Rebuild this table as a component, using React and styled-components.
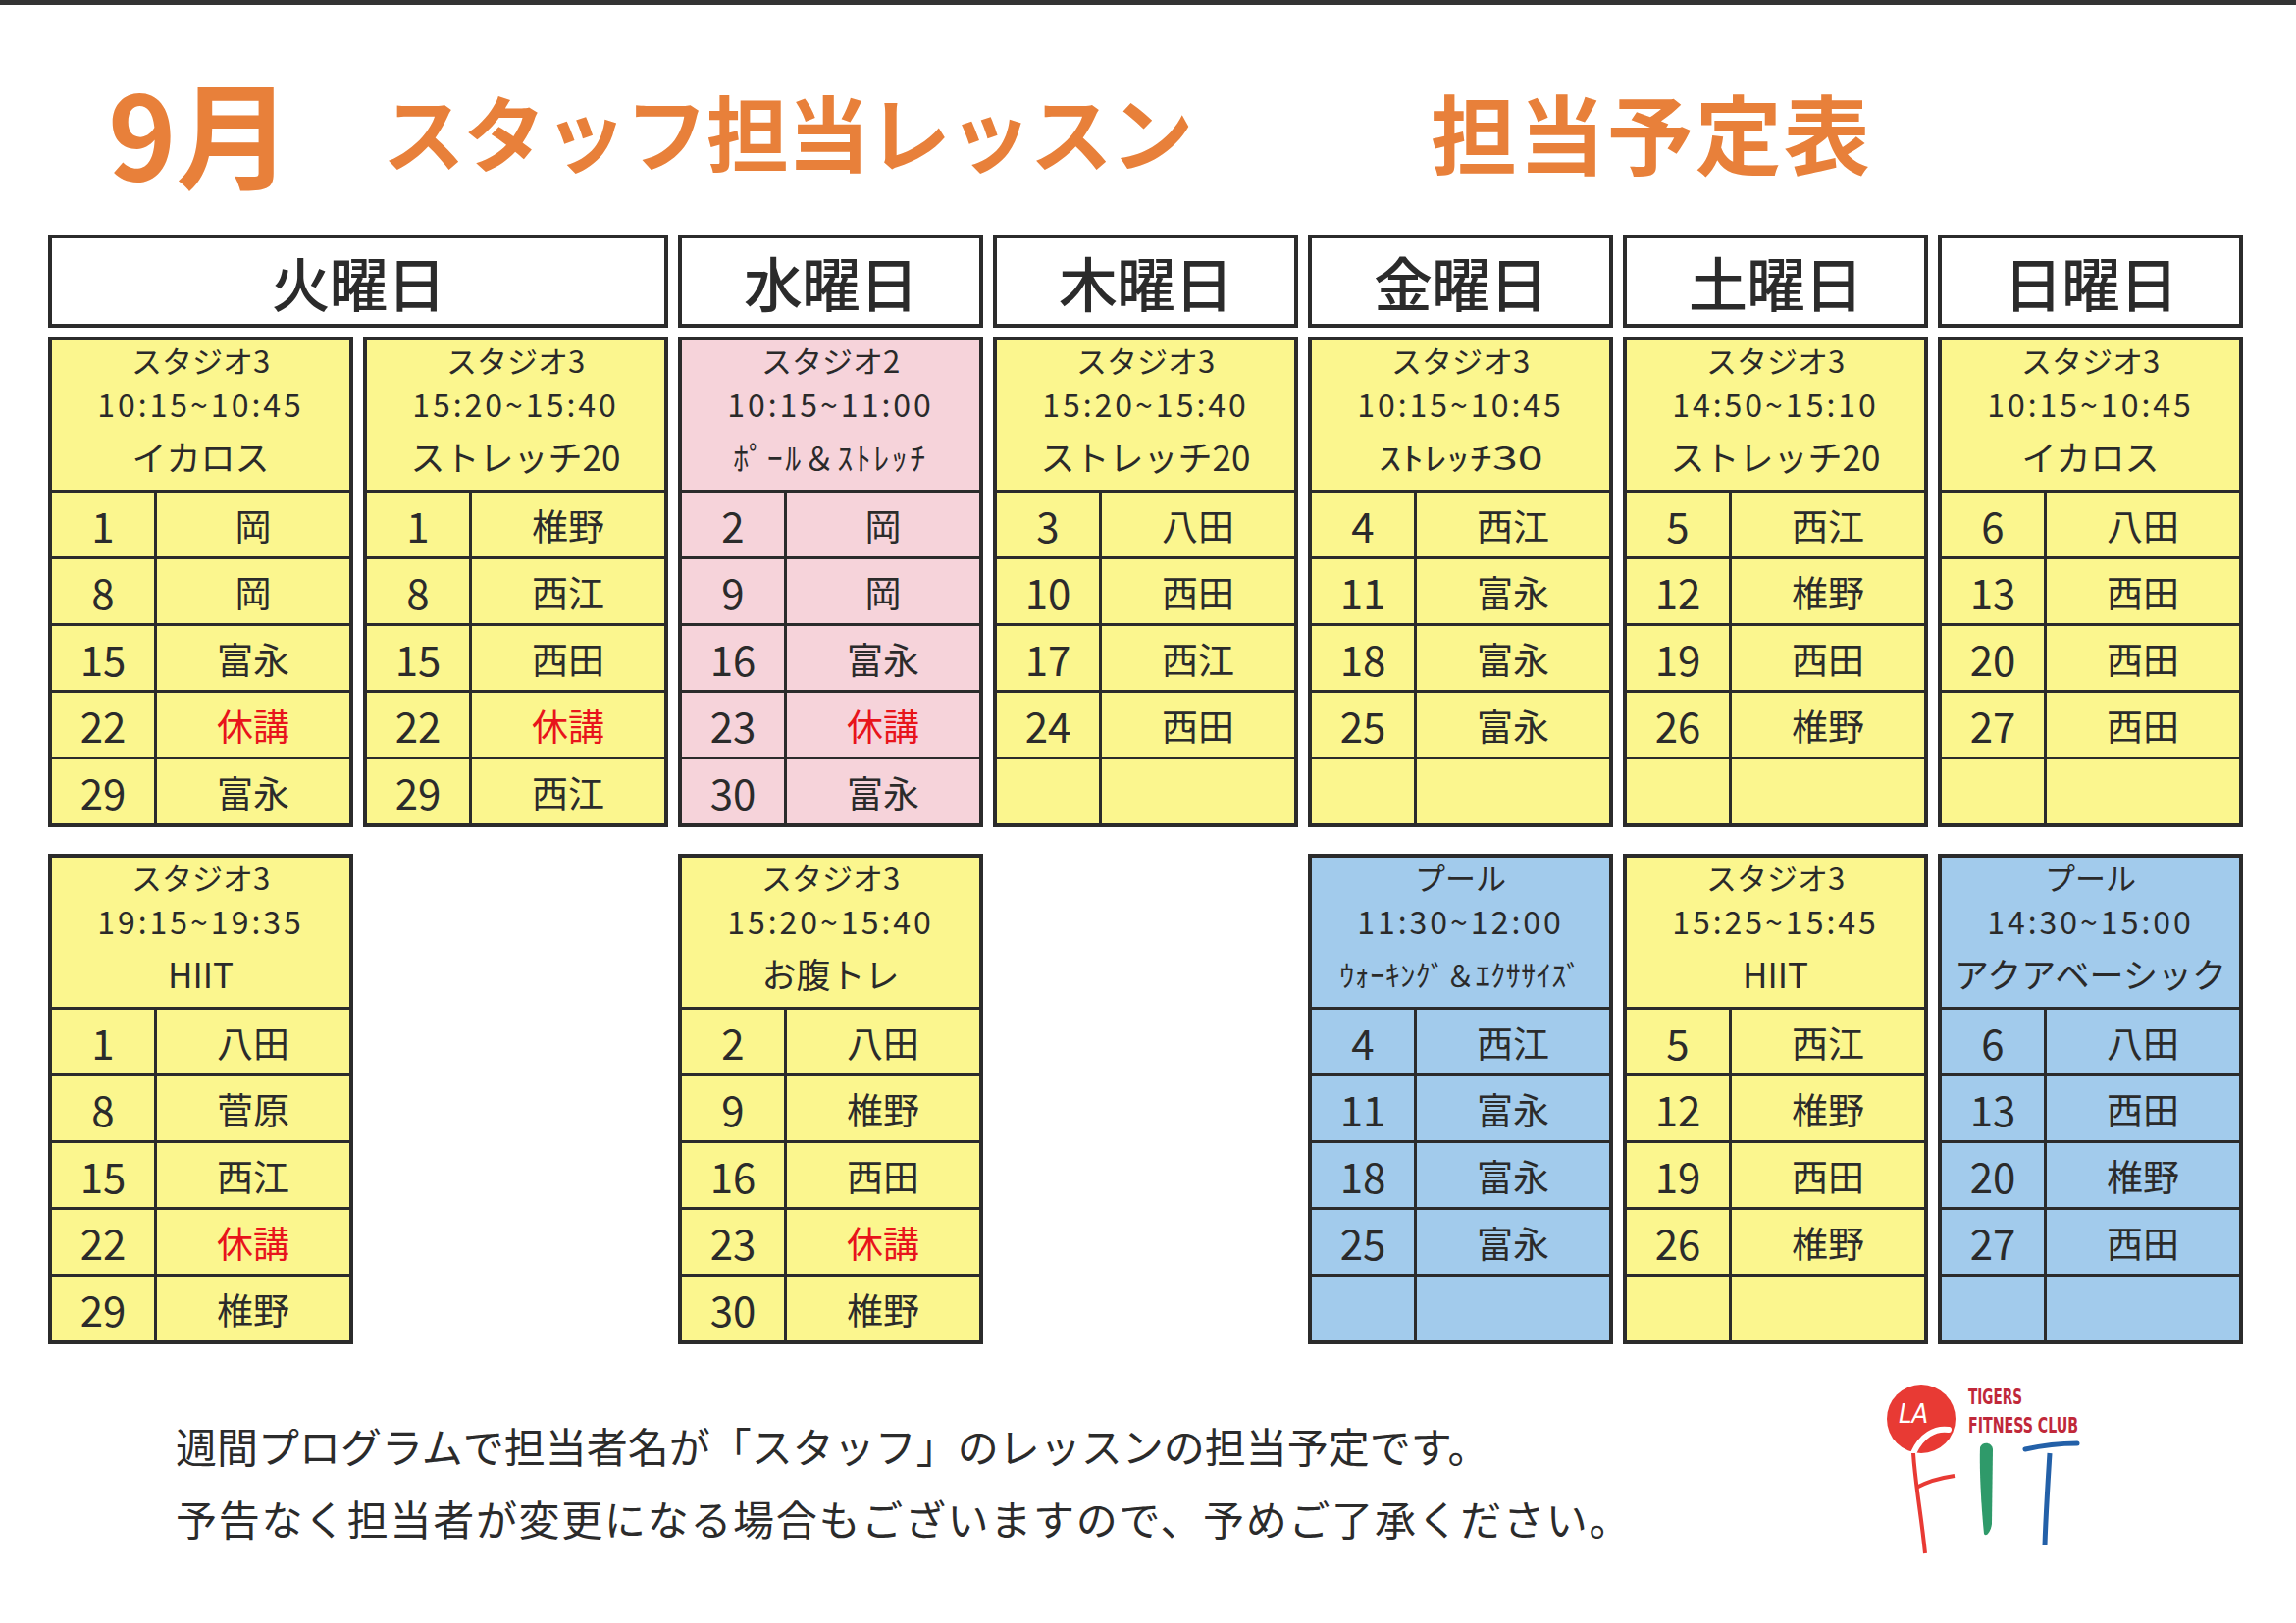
import React from 'react';
import styled, { createGlobalStyle } from 'styled-components';

const GlobalStyle = createGlobalStyle`
    html, body {
        margin: 0;
        padding: 0;
        background: #fff;
    }
    body {
        font-family: "Noto Sans CJK JP", "Noto Sans", sans-serif;
        color: #2a2a2a;
    }
`;

const colors = {
    yellow: '#fbf68e',
    pink: '#f6d3da',
    blue: '#a2cbec',
};

const firstRow = [
    { id: 'tue-a', col: 1, bg: 'yellow', place: 'スタジオ3', time: '10:15~10:45', lesson: 'イカロス',
        rows: [['1', '岡'], ['8', '岡'], ['15', '富永'], ['22', '休講'], ['29', '富永']] },
    { id: 'tue-b', col: 2, bg: 'yellow', place: 'スタジオ3', time: '15:20~15:40', lesson: 'ストレッチ20',
        rows: [['1', '椎野'], ['8', '西江'], ['15', '西田'], ['22', '休講'], ['29', '西江']] },
    { id: 'wed', col: 3, bg: 'pink', place: 'スタジオ2', time: '10:15~11:00', lesson: 'ﾎﾟｰﾙ＆ｽﾄﾚｯﾁ',
        size: 32, spacing: 2.5,
        rows: [['2', '岡'], ['9', '岡'], ['16', '富永'], ['23', '休講'], ['30', '富永']] },
    { id: 'thu', col: 4, bg: 'yellow', place: 'スタジオ3', time: '15:20~15:40', lesson: 'ストレッチ20',
        rows: [['3', '八田'], ['10', '西田'], ['17', '西江'], ['24', '西田'], ['', '']] },
    { id: 'fri', col: 5, bg: 'yellow', place: 'スタジオ3', time: '10:15~10:45', lesson: 'ｽﾄﾚｯﾁ30',
        size: 32, stretch: 1.45,
        rows: [['4', '西江'], ['11', '富永'], ['18', '富永'], ['25', '富永'], ['', '']] },
    { id: 'sat', col: 6, bg: 'yellow', place: 'スタジオ3', time: '14:50~15:10', lesson: 'ストレッチ20',
        rows: [['5', '西江'], ['12', '椎野'], ['19', '西田'], ['26', '椎野'], ['', '']] },
    { id: 'sun', col: 7, bg: 'yellow', place: 'スタジオ3', time: '10:15~10:45', lesson: 'イカロス',
        rows: [['6', '八田'], ['13', '西田'], ['20', '西田'], ['27', '西田'], ['', '']] },
];

const secondRow = [
    { id: 'tue-c', col: 1, bg: 'yellow', place: 'スタジオ3', time: '19:15~19:35', lesson: 'HIIT',
        rows: [['1', '八田'], ['8', '菅原'], ['15', '西江'], ['22', '休講'], ['29', '椎野']] },
    { id: 'wed-b', col: 3, bg: 'yellow', place: 'スタジオ3', time: '15:20~15:40', lesson: 'お腹トレ',
        rows: [['2', '八田'], ['9', '椎野'], ['16', '西田'], ['23', '休講'], ['30', '椎野']] },
    { id: 'fri-b', col: 5, bg: 'blue', place: 'プール', time: '11:30~12:00', lesson: 'ｳｫｰｷﾝｸﾞ＆ｴｸｻｻｲｽﾞ',
        size: 30, spacing: 0.5,
        rows: [['4', '西江'], ['11', '富永'], ['18', '富永'], ['25', '富永'], ['', '']] },
    { id: 'sat-b', col: 6, bg: 'yellow', place: 'スタジオ3', time: '15:25~15:45', lesson: 'HIIT',
        rows: [['5', '西江'], ['12', '椎野'], ['19', '西田'], ['26', '椎野'], ['', '']] },
    { id: 'sun-b', col: 7, bg: 'blue', place: 'プール', time: '14:30~15:00', lesson: 'アクアベーシック',
        rows: [['6', '八田'], ['13', '西田'], ['20', '椎野'], ['27', '西田'], ['', '']] },
];

const days = [
    { label: '火曜日', span: 2 },
    { label: '水曜日', span: 1 },
    { label: '木曜日', span: 1 },
    { label: '金曜日', span: 1 },
    { label: '土曜日', span: 1 },
    { label: '日曜日', span: 1 },
];

const Page = styled.div`
    width: 2340px;
    height: 1654px;
    box-sizing: border-box;
    border-top: 5px solid #333;
    overflow: hidden;
`;

const TitleRow = styled.div`
    height: 234px;
    box-sizing: border-box;
    padding: 22px 0 0 110px;
    display: flex;
    align-items: center;
    color: #e8803a;
    font-weight: 700;
    white-space: nowrap;
`;

const TitlePart = styled.span`
    font-size: ${(p) => p.$size}px;
    letter-spacing: ${(p) => p.$spacing || 0}px;
    margin-left: ${(p) => p.$offset || 0}px;
    line-height: 1;
`;

const Board = styled.div`
    padding-left: 49px;
`;

const DayRow = styled.div`
    display: grid;
    grid-template-columns: repeat(7, 311px);
    column-gap: 10px;
`;

const DayHeader = styled.div`
    grid-column: span ${(p) => p.$span};
    height: 95px;
    box-sizing: border-box;
    border: 4px solid #2b2b2b;
    display: flex;
    align-items: center;
    justify-content: center;
    font-size: 60px;
    font-weight: 500;
    color: #2b2b2b;
    letter-spacing: -1px;
`;

const TableGrid = styled.div`
    margin-top: 9px;
    display: grid;
    grid-template-columns: repeat(7, 311px);
    grid-template-rows: 500px 500px;
    column-gap: 10px;
    row-gap: 27px;
`;

const Lesson = styled.div`
    grid-column: ${(p) => p.$col};
    grid-row: ${(p) => p.$row};
    background: ${(p) => colors[p.$bg]};
    border: 4px solid #2b2b2b;
    display: flex;
    flex-direction: column;
`;

const Info = styled.div`
    height: 152px;
    box-sizing: border-box;
    display: flex;
    flex-direction: column;
    align-items: center;
    white-space: nowrap;
`;

const Place = styled.div`
    height: 40px;
    line-height: 40px;
    font-size: 31px;
`;

const Time = styled.div`
    height: 48px;
    line-height: 48px;
    font-size: 32px;
    letter-spacing: 3px;
`;

const Name = styled.div`
    height: 60px;
    line-height: 60px;
    padding: 0 4px;
    font-size: ${(p) => p.$size || 35}px;
    letter-spacing: ${(p) => p.$spacing || 0}px;
    transform: scaleX(${(p) => p.$stretch || 1});
`;

const Row = styled.div`
    height: 68px;
    box-sizing: border-box;
    border-top: 3px solid #2b2b2b;
    display: grid;
    grid-template-columns: 104px 1fr;
`;

const Cell = styled.div`
    display: flex;
    align-items: center;
    justify-content: center;
    font-size: ${(p) => (p.$num ? 42 : 37)}px;
    color: ${(p) => (p.$off ? '#e8141b' : '#2b2b2b')};
    & + & {
        border-left: 3px solid #2b2b2b;
    }
`;

const Footer = styled.div`
    margin-top: 66px;
    display: flex;
    align-items: flex-start;
    padding-left: 179px;
`;

const Notes = styled.div`
    font-size: 42px;
    line-height: 74px;
    color: #2b2b2b;
    white-space: nowrap;
`;

const NoteLine = styled.div`
    letter-spacing: ${(p) => p.$spacing}px;
`;

const Logo = styled.svg`
    margin-left: auto;
    margin-right: 186px;
    margin-top: -33px;
`;

const logoFont = 'DejaVu Sans Condensed, Liberation Sans Narrow, Liberation Sans, sans-serif';

function LessonTable({ item, row }) {
    return (
        <Lesson $col={item.col} $row={row} $bg={item.bg}>
            <Info>
                <Place>{item.place}</Place>
                <Time>{item.time}</Time>
                <Name $size={item.size} $spacing={item.spacing} $stretch={item.stretch}>{item.lesson}</Name>
            </Info>
            {item.rows.map(([day, staff], i) => (
                <Row key={i}>
                    <Cell $num>{day}</Cell>
                    <Cell $off={staff === '休講'}>{staff}</Cell>
                </Row>
            ))}
        </Lesson>
    );
}

function FitLogo() {
    return (
        <Logo width="240" height="185" viewBox="0 0 240 185">
            <circle cx="44" cy="43" r="35" fill="#e83a34" />
            <text x="21" y="47" fill="#fff" fontSize="27" fontStyle="italic" fontFamily={logoFont}>LA</text>
            <path d="M36 78 C 44 60, 58 52, 72 54" stroke="#fff" strokeWidth="6" fill="none" strokeLinecap="round" />
            <path d="M36 78 C 38 110, 44 140, 48 180" stroke="#e83a34" strokeWidth="4" fill="none" />
            <path d="M39 113 C 52 106, 64 103, 78 101" stroke="#e83a34" strokeWidth="4" fill="none" />
            <g transform="translate(92 28) scale(1 1.5)">
                <text x="0" y="0" fill="#c0283a" fontSize="14" fontWeight="bold" fontFamily={logoFont}
                    textLength="55" lengthAdjust="spacingAndGlyphs">TIGERS</text>
            </g>
            <g transform="translate(92 57) scale(1 1.5)">
                <text x="0" y="0" fill="#c0283a" fontSize="14" fontWeight="bold" fontFamily={logoFont}
                    textLength="112" lengthAdjust="spacingAndGlyphs">FITNESS CLUB</text>
            </g>
            <path d="M104 72 C 106 66, 116 66, 117 74 L 116 150 C 115 158, 110 164, 108 160 C 106 140, 103 100, 104 72 Z"
                fill="#2f9a6a" />
            <path d="M150 74 C 168 70, 188 68, 203 68" stroke="#2360a8" strokeWidth="5" fill="none" strokeLinecap="round" />
            <path d="M175 78 C 173 110, 171 140, 170 172" stroke="#2360a8" strokeWidth="5" fill="none" />
        </Logo>
    );
}

export default function App() {
    return (
        <Page>
            <GlobalStyle />
            <TitleRow>
                <TitlePart $size={118}>9月</TitlePart>
                <TitlePart $size={84} $spacing={-1.5} $offset={92}>スタッフ担当レッスン</TitlePart>
                <TitlePart $size={88} $spacing={2} $offset={243}>担当予定表</TitlePart>
            </TitleRow>
            <Board>
                <DayRow>
                    {days.map((d) => (
                        <DayHeader key={d.label} $span={d.span}>{d.label}</DayHeader>
                    ))}
                </DayRow>
                <TableGrid>
                    {firstRow.map((item) => (
                        <LessonTable key={item.id} item={item} row={1} />
                    ))}
                    {secondRow.map((item) => (
                        <LessonTable key={item.id} item={item} row={2} />
                    ))}
                </TableGrid>
            </Board>
            <Footer>
                <Notes>
                    <NoteLine $spacing={0}>週間プログラムで担当者名が「スタッフ」のレッスンの担当予定です。</NoteLine>
                    <NoteLine $spacing={1.7}>予告なく担当者が変更になる場合もございますので、予めご了承ください。</NoteLine>
                </Notes>
                <FitLogo />
            </Footer>
        </Page>
    );
}
